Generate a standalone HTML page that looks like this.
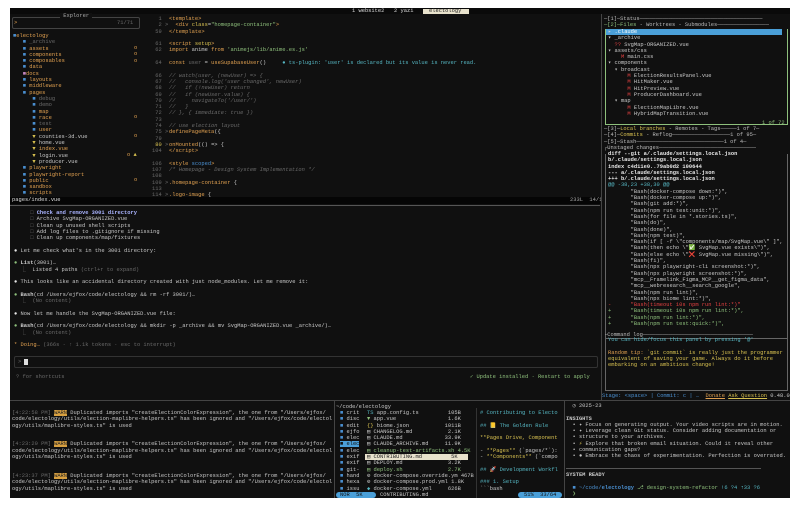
<!DOCTYPE html>
<html><head><meta charset="utf-8"><style>
*{margin:0;padding:0;box-sizing:border-box}
body{width:800px;height:510px;background:#fff;position:relative;overflow:hidden;font-family:"Liberation Mono","DejaVu Sans Mono",monospace;font-size:5.4px;line-height:6.3px;color:#c8c8c8}
.term{position:absolute;left:10px;top:8px;width:780px;height:490px;background:#101010}
pre{position:absolute;font:inherit;white-space:pre;margin:0}
.a{position:absolute}
.c{color:#6a6a6a}.o{color:#e0a050}.f{color:#4a8fd0}.g{color:#8ec07c}.y{color:#d7c050}.r{color:#e04040}.p{color:#c586c0}.b{color:#56b6c2}.w{color:#e8e8e8}.i{font-style:italic}.bd{font-weight:bold}
</style></head><body>
<div class="term">
<div class="a" style="left:0;top:0;width:780px;height:6px;background:#0a0a0a"></div>
<pre style="left:342px;top:0;color:#ddd">1 website2   2 yazi </pre>
<div class="a" style="left:413px;top:1px;width:46px;height:5px;background:#e8e2cc"></div>
<pre style="left:419px;top:0;color:#222">electology</pre>

<div class="a" style="left:2px;top:9px;width:128px;height:12px;border:1px solid #444;border-radius:2px"></div>
<pre style="left:50px;top:5px;background:#101010;color:#aaa"> Explorer </pre>
<pre style="left:4px;top:12px" class="o">&gt;</pre><pre style="left:107px;top:12px" class="c">71/71</pre>
<pre style="left:3px;top:25px;line-height:6.3px"><span class="f">■</span><span class="o">electology</span>
   <span class="f">■</span> <span class="c">_archive</span>
   <span class="f">■</span> <span class="o">assets</span>
   <span class="f">■</span> <span class="o">components</span>
   <span class="f">■</span> <span class="o">composables</span>
   <span class="f">■</span> <span class="o">data</span>
   <span class="p">■</span><span class="o">docs</span>
   <span class="f">■</span> <span class="o">layouts</span>
   <span class="f">■</span> <span class="o">middleware</span>
   <span class="f">■</span> <span class="o">pages</span>
      <span class="f">■</span> <span class="c">debug</span>
      <span class="f">■</span> <span class="c">demo</span>
      <span class="f">■</span> <span class="o">map</span>
      <span class="f">■</span> <span class="o">race</span>
      <span class="f">■</span> <span class="c">test</span>
      <span class="f">■</span> <span class="o">user</span>
      <span class="y">▼</span> counties-3d.vue
      <span class="y">▼</span> home.vue
      <span class="y">▼</span> <span class="o">index.vue</span>
      <span class="y">▼</span> login.vue
      <span class="y">▼</span> producer.vue
   <span class="f">■</span> <span class="o">playwright</span>
   <span class="f">■</span> <span class="o">playwright-report</span>
   <span class="f">■</span> <span class="o">public</span>
   <span class="f">■</span> <span class="o">sandbox</span>
   <span class="f">■</span> <span class="o">scripts</span></pre>
<pre style="left:124px;top:37px;line-height:6.3px" class="o">o
o
o</pre>
<pre style="left:124px;top:106px" class="o">o</pre><pre style="left:124px;top:125px" class="o">o</pre>
<pre style="left:117px;top:144px" class="o">o <span class="y">▲</span></pre>
<pre style="left:124px;top:169px" class="o">o</pre><pre style="left:124px;top:188px" class="o">o</pre>

<pre style="left:142px;top:8px;line-height:6.3px" class="c">  1
  2 &gt;
 59

 61
 62

 64

 66
 67
 68
 69
 70
 71
 72
 73
 74
 75 &gt;
 79
<span class="y"> 80</span> &gt;
104

106
107
108
109 &gt;
113
114 &gt;</pre>
<pre style="left:159px;top:8px;line-height:6.3px"><span class="o">&lt;template&gt;</span>
  <span class="o">&lt;div</span> <span class="y">class</span>=<span class="g">"homepage-container"</span><span class="o">&gt;</span>
<span class="o">&lt;/template&gt;</span>

<span class="o">&lt;script</span> <span class="y">setup</span><span class="o">&gt;</span>
<span class="o">import</span> anime <span class="o">from</span> <span class="g">'animejs/lib/anime.es.js'</span>

<span class="o">const</span> <span class="c">user</span> = <span class="o">useSupabaseUser</span>()     <span class="b">● ts-plugin: 'user' is declared but its value is never read.</span>

<span class="c i">// watch(user, (newUser) =&gt; {
//   console.log('user changed', newUser)
//   if (!newUser) return
//   if (newUser.value) {
//     navigateTo('/user/')
//   }
// }, { immediate: true })

// use election layout</span>
<span class="o">definePageMeta</span>({

<span class="o">onMounted</span>(() =&gt; {
<span class="o">&lt;/script&gt;</span>

<span class="o">&lt;style</span> <span class="f">scoped</span><span class="o">&gt;</span>
<span class="c i">/* Homepage - Design System Implementation */</span>

<span class="o">.homepage-container</span> {

<span class="o">.logo-image</span> {</pre>
<div class="a" style="left:0;top:189px;width:590px;height:7px;background:#050505"></div>
<pre style="left:2px;top:189px;color:#ddd">pages/index.vue</pre>
<pre style="left:560px;top:189px;color:#aaa">233L  14/1</pre>
<div class="a" style="left:0;top:197px;width:590px;height:1px;background:#555"></div>

<pre style="left:4px;top:202px;line-height:6.3px">     <span class="c">□</span> <span style="color:#aab4ff" class="bd">Check and remove 3001 directory</span>
     <span class="c">□</span> Archive SvgMap-ORGANIZED.vue
     <span class="c">□</span> Clean up unused shell scripts
     <span class="c">□</span> Add log files to .gitignore if missing
     <span class="c">□</span> Clean up components/map/fixtures

<span class="w">●</span> Let me check what's in the 3001 directory:

<span class="g">●</span> <span class="bd">List</span>(3001)…
  <span class="c">⎿</span>  Listed 4 paths <span class="c">(ctrl+r to expand)</span>

<span class="w">●</span> This looks like an accidental directory created with just node_modules. Let me remove it:

<span class="g">●</span> <span class="bd">Bash</span>(cd /Users/ejfox/code/electology &amp;&amp; rm -rf 3001/)…
  <span class="c">⎿</span>  <span class="c">(No content)</span>

<span class="w">●</span> Now let me handle the SvgMap-ORGANIZED.vue file:

<span class="g">●</span> <span class="bd">Bash</span>(cd /Users/ejfox/code/electology &amp;&amp; mkdir -p _archive &amp;&amp; mv SvgMap-ORGANIZED.vue _archive/)…
  <span class="c">⎿</span>  <span class="c">(No content)</span>

<span class="o">* Doing…</span> <span class="c">(366s · ↑ 1.1k tokens · esc to interrupt)</span></pre>
<div class="a" style="left:4px;top:348px;width:584px;height:12px;border:1px solid #333;border-radius:2px"></div>
<pre style="left:8px;top:351px" class="c">&gt; <span style="background:#ddd">&nbsp;</span></pre>
<pre style="left:6px;top:366px" class="c">? for shortcuts</pre>
<pre style="left:460px;top:366px" class="g">✓ Update installed · Restart to apply</pre>

<div class="a" style="left:591px;top:6px;width:1px;height:386px;background:#444"></div>
<pre style="left:594px;top:8px;line-height:6.3px;color:#bbb">─[1]─Status──────────────────────────────────────
<span class="g">─[2]─Files</span> - Worktrees - Submodules────────────────</pre>
<div class="a" style="left:595px;top:21px;width:183px;height:96px;border:1px solid #8ec07c;border-top:none"></div>
<div class="a" style="left:596px;top:21px;width:176px;height:6px;background:#4a9fd8"></div>
<pre style="left:598px;top:21px;line-height:6.3px">▸ <span style="color:#fff">.claude</span>
▾ _archive
  <span class="r">??</span> SvgMap-ORGANIZED.vue
▾ assets/css
    <span class="r">M</span> main.css
▾ components
  ▾ broadcast
      <span class="r">M</span> ElectionResultsPanel.vue
      <span class="r">M</span> HitMaker.vue
      <span class="r">M</span> HitPreview.vue
      <span class="r">M</span> ProducerDashboard.vue
  ▾ map
      <span class="r">M</span> ElectionMapLibre.vue
      <span class="r">M</span> HybridMapTransition.vue</pre>
<pre style="left:752px;top:112px" class="g">1 of 72</pre>
<pre style="left:594px;top:118px;line-height:6.3px;color:#bbb">─[3]─<span class="y">Local branches</span> - Remotes - Tags─────1 of 7─
─[4]─<span class="y">Commits</span> - Reflog──────────────────1 of 95─
─[5]─Stash───────────────────────────1 of 4─
┌Unstaged changes──────────────────────────────</pre>
<div class="a" style="left:595px;top:146px;width:183px;height:185px;border:1px solid #666;border-top:none"></div>
<pre style="left:598px;top:143px;line-height:6.3px"><span class="bd w">diff --git a/.claude/settings.local.json
b/.claude/settings.local.json
index c4d11e0..79ab0d2 100644
--- a/.claude/settings.local.json
+++ b/.claude/settings.local.json</span>
<span class="b">@@ -38,23 +38,30 @@</span>
       "Bash(docker-compose down:*)",
       "Bash(docker-compose up:*)",
       "Bash(git add:*)",
       "Bash(npm run test:unit:*)",
       "Bash(for file in *.stories.ts)",
       "Bash(do)",
       "Bash(done)",
       "Bash(npm test)",
       "Bash(if [ -f \"components/map/SvgMap.vue\" ]",
       "Bash(then echo \"<span class="g">✅</span> SvgMap.vue exists\")",
       "Bash(else echo \"<span class="r">❌</span> SvgMap.vue missing\")",
       "Bash(fi)",
       "Bash(npx playwright-cli screenshot:*)",
       "Bash(npx playwright screenshot:*)",
       "mcp__Framelink_Figma_MCP__get_figma_data",
       "mcp__webresearch__search_google",
       "Bash(npm run lint)",
       "Bash(npx biome lint:*)",
<span class="r">-      "Bash(timeout 10s npm run lint:*)"</span>
<span class="g">+      "Bash(timeout 10s npm run lint:*)",</span>
<span class="g">+      "Bash(npm run lint:*)",</span>
<span class="g">+      "Bash(npm run test:quick:*)",</span></pre>
<pre style="left:594px;top:324px;color:#bbb">┌Command log──────────────────────────────────</pre>
<div class="a" style="left:595px;top:327px;width:183px;height:56px;border:1px solid #666;border-top:none"></div>
<pre style="left:598px;top:329px;line-height:6.3px" class="b">You can hide/focus this panel by pressing '@'

<span class="o">Random tip:</span> <span class="y">`git commit` is really just the programmer
equivalent of saving your game. Always do it before
embarking on an ambitious change!</span></pre>
<pre style="left:592px;top:385px"><span class="f">Stage: &lt;space&gt; | Commit: c | …</span>  <span class="o" style="text-decoration:underline">Donate</span> <span class="y" style="text-decoration:underline">Ask Question</span> 0.48.0</pre>
<div class="a" style="left:0;top:392px;width:780px;height:1px;background:#444"></div>

<pre style="left:2px;top:402px;line-height:6.3px"><span class="c">[4:22:58 PM]</span> <span style="background:#d8a040;color:#222">WARN</span> Duplicated imports "createElectionColorExpression", the one from "/Users/ejfox/
code/electology/utils/election-maplibre-helpers.ts" has been ignored and "/Users/ejfox/code/electol
ogy/utils/maplibre-styles.ts" is used


<span class="c">[4:23:20 PM]</span> <span style="background:#d8a040;color:#222">WARN</span> Duplicated imports "createElectionColorExpression", the one from "/Users/ejfox/
code/electology/utils/election-maplibre-helpers.ts" has been ignored and "/Users/ejfox/code/electol
ogy/utils/maplibre-styles.ts" is used


<span class="c">[4:23:37 PM]</span> <span style="background:#d8a040;color:#222">WARN</span> Duplicated imports "createElectionColorExpression", the one from "/Users/ejfox/
code/electology/utils/election-maplibre-helpers.ts" has been ignored and "/Users/ejfox/code/electol
ogy/utils/maplibre-styles.ts" is used</pre>
<div class="a" style="left:324px;top:393px;width:1px;height:97px;background:#444"></div>
<pre style="left:326px;top:396px">~/code/electology</pre>
<pre style="left:330px;top:402px;line-height:6.3px"><span class="f">■</span> crit
<span class="f">■</span> disc
<span class="f">■</span> edit
<span class="f">■</span> ejfo
<span class="f">■</span> elec
<span style="background:#4a9fd8;color:#111">■ elec</span>
<span class="f">■</span> elec
<span class="f">■</span> exif
<span class="f">■</span> exif
<span class="f">■</span> git-
<span class="f">■</span> hand
<span class="f">■</span> hexa
<span class="f">■</span> issu</pre>
<div class="a" style="left:355px;top:446px;width:103px;height:6px;background:#e8e2cc"></div>
<pre style="left:357px;top:402px;line-height:6.3px"><span class="b">TS</span> app.config.ts         105B
<span class="g">▼</span> app.vue                1.6K
<span class="y">{}</span> biome.json           1011B
▤ CHANGELOG.md           2.1K
▤ CLAUDE.md             33.9K
▤ CLAUDE_ARCHIVE.md     11.9K
<span class="g">▤ cleanup-test-artifacts.sh 4.5K</span>
<span style="color:#222">▤ CONTRIBUTING.md         5K</span>
▤ DEPLOY.md              3.2K
<span class="g">▤ deploy.sh              2.7K</span>
⚙ docker-compose.override.ym 467B
⚙ docker-compose.prod.yml 1.8K
<span class="b">◆</span> docker-compose.yml     626B</pre>
<div class="a" style="left:466px;top:400px;width:1px;height:90px;background:#333"></div>
<pre style="left:470px;top:402px;line-height:6.3px"><span class="b"># Contributing to Electo</span>

<span class="b">## 📒 The Golden Rule</span>

<span class="y">**Pages Drive, Component</span>

- <span class="y">**Pages**</span> (&#96;pages/*&#96;):
- <span class="y">**Components**</span> (&#96;compo

<span class="b">## 🚀 Development Workfl</span>

<span class="b">### 1. Setup</span>
&#96;&#96;&#96;bash</pre>
<div class="a" style="left:326px;top:484px;width:40px;height:6px;background:#4a9fd8;border-radius:3px"></div>
<pre style="left:330px;top:484px;color:#111">NOR  5K</pre>
<pre style="left:370px;top:484px">CONTRIBUTING.md</pre>
<div class="a" style="left:508px;top:484px;width:44px;height:6px;background:#4a9fd8;border-radius:3px"></div>
<pre style="left:514px;top:484px;color:#111">51%  33/64</pre>
<div class="a" style="left:554px;top:393px;width:1px;height:97px;background:#444"></div>
<pre style="left:556px;top:395px;line-height:6.3px">  ◷ 2025-23

<span class="bd">INSIGHTS</span>
  • ✦ Focus on generating output. Your video scripts are in motion.
  • ✦ Leverage clean Git status. Consider adding documentation or
  • structure to your archives.
  • <span class="y">⚡</span> Explore that broken email situation. Could it reveal other
  • communication gaps?
  • ● Embrace the chaos of experimentation. Perfection is overrated.


<span class="bd">SYSTEM READY</span>

  <span class="f">■ ~/code/</span><span class="f bd">electology</span> <span class="g">⎇ design-system-refactor</span> <span class="b">!6 ?4 ⇡33 ?6</span>
  <span class="g">❯</span></pre>
<div class="a" style="left:556px;top:460px;width:195px;height:1px;background:#555"></div>
</div>
</body></html>
